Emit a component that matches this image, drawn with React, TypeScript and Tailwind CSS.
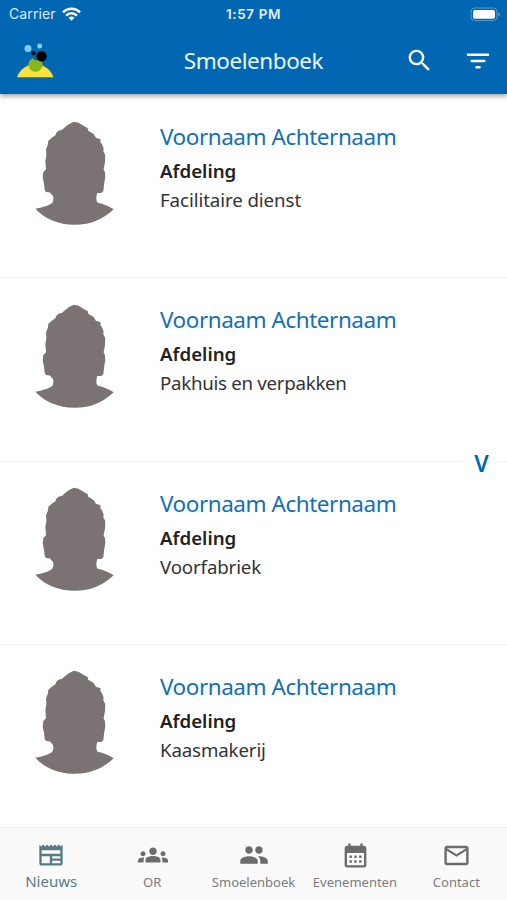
import type { ReactNode } from 'react';
import { MdCalendarMonth, MdGroups, MdMailOutline, MdNewspaper, MdPeople, MdSearch } from 'react-icons/md';

const people = [
  { department: 'Facilitaire dienst', tracking: 'tracking-[-0.08px]' },
  { department: 'Pakhuis en verpakken', tracking: 'tracking-[-0.28px]' },
  { department: 'Voorfabriek', tracking: 'tracking-[-0.14px]' },
  { department: 'Kaasmakerij', tracking: 'tracking-[-0.14px]' },
];

function Silhouette() {
  return (
    <svg viewBox="44 30 236 314" className="h-[104.5px] w-[79px]" preserveAspectRatio="none">
      <path
        fill="#7b7373"
        d="M160 32 L146 39 L134 48 L125 56 L114 59 L107 66 L105 73 L94 80 L84 89 L82 103 L77 115 L78 132 L75 150 L77 175 L69 183 L67 199 L71 219 L73 237 L77 243 L89 245 C93 252 100 254 99 263 L97 274 C88 284 65 290 45 294 C73 324 113 342 163 342 C211 342 251 323 279 295 C263 287 248 279 232 276 C225 270 227 256 230 246 L242 246 L248 241 L251 216 L254 199 L253 184 L249 175 L253 155 L254 133 L248 120 L249 113 L244 100 L239 93 L240 85 L226 80 L219 69 L203 59 L201 50 L196 49 L185 42 L174 35 Z"
      />
    </svg>
  );
}

function Logo() {
  return (
    <svg viewBox="0 0 38 36" className="h-[36px] w-[38px]">
      <path d="M1 35.2C4 27 11 22.3 19.3 22.3S34.5 27 37.5 35.2Z" fill="#fbe13c" />
      <circle cx="19.5" cy="22.8" r="7.1" fill="#8ab51b" />
      <circle cx="20" cy="15.8" r="2.6" fill="#0267b3" />
      <circle cx="12" cy="6.5" r="3.5" fill="#7dcdf4" />
      <circle cx="23.7" cy="4" r="2.5" fill="#7dcdf4" />
      <circle cx="17.5" cy="11.3" r="2.2" fill="#06131c" />
      <circle cx="25.5" cy="14.2" r="5.2" fill="#000" />
    </svg>
  );
}

function Wifi() {
  return (
    <svg viewBox="0 0 19 14" className="ml-[6px] h-[14px] w-[19px]" fill="none" stroke="#fff" strokeWidth="2.5">
      <path d="M1 5.4C5.8.5 13.2.5 18 5.4M4.1 8.6C7.2 5.5 11.8 5.5 14.9 8.6" />
      <path d="M9.5 13.7 6.6 10.7C8.3 9.2 10.7 9.2 12.4 10.7Z" fill="#fff" stroke="none" />
    </svg>
  );
}

function Battery() {
  return (
    <svg viewBox="0 0 31 15" className="h-[15px] w-[31px]">
      <rect x="1" y="1" width="26" height="12.6" rx="3.8" fill="none" stroke="#559acf" strokeWidth="1" />
      <rect x="3" y="3" width="22" height="8.7" rx="1.9" fill="#fff" />
      <path d="M28.5 5.2C30.2 6 30.2 8.7 28.5 9.5Z" fill="#75add8" />
    </svg>
  );
}

function Tab({ icon, label, active }: { icon: ReactNode; label: string; active?: boolean }) {
  return (
    <div className={`flex flex-1 flex-col items-center ${active ? 'text-[#587a88]' : 'text-[#6c6c6c]'}`}>
      <div className="mt-[12px] flex h-[30px] items-center pl-px">{icon}</div>
      <div
        className={`whitespace-nowrap ${active ? 'mt-px pl-px text-[15px] leading-[20px]' : 'mt-[2px] text-[13px] leading-[20px] text-[#7c7c7c]'}`}
      >
        {label}
      </div>
    </div>
  );
}

export default function App() {
  return (
    <div className="relative flex h-[900px] w-[507px] flex-col overflow-hidden bg-white font-['Noto_Sans',sans-serif]">
      <header className="z-10 h-[94px] shrink-0 bg-[#0267b3] text-white shadow-[0_2px_5px_rgba(0,0,0,0.4)]">
        <div className="grid h-[28px] grid-cols-3 items-center font-['Inter',sans-serif] text-[14px] leading-[28px]">
          <div className="flex items-center pl-[9px] tracking-[0.1px] text-[#dcecf7]">
            Carrier
            <Wifi />
          </div>
          <div className="text-center text-[13.5px] font-semibold tracking-[0.6px] text-[#e6f3fb]">1:57 PM</div>
          <div className="flex justify-end pr-[6px]">
            <Battery />
          </div>
        </div>
        <div className="grid h-[66px] grid-cols-[160px_1fr_160px] items-center">
          <div className="mt-[-3px] pl-[16px]">
            <Logo />
          </div>
          <h1 className="text-center text-[22.5px] leading-[30px] tracking-[-0.45px] text-[#e8f5fc]">Smoelenboek</h1>
          <div className="flex items-center justify-end pr-[17px]">
            <MdSearch size={29} className="-mt-px" />
            <svg viewBox="0 0 24 18" className="ml-[32px] h-[18px] w-[24px]" stroke="#fff" strokeWidth="2.5" strokeLinecap="round">
              <path d="M2 2.7H22M5.7 9H18.3M10.5 15.2H13.5" />
            </svg>
          </div>
        </div>
      </header>
      <main className="flex h-[734px] shrink-0 flex-col pt-px">
        {people.map(({ department, tracking }) => (
          <article key={department} className="flex flex-1 border-b border-[#f0f0f0] pl-[34.5px]">
            <div className="mt-[25.5px] w-[125.5px] shrink-0">
              <Silhouette />
            </div>
            <div className="pt-[27px] whitespace-nowrap">
              <h2 className="text-[22.5px] leading-[30px] tracking-[-0.46px] text-[#1470b5]">Voornaam Achternaam</h2>
              <div className="mt-[5px] text-[18.7px] leading-[28px] font-semibold text-[#222]">Afdeling</div>
              <div className={`text-[18.7px] leading-[30px] text-[#333] ${tracking}`}>{department}</div>
            </div>
          </article>
        ))}
      </main>
      <nav className="flex h-[72px] shrink-0 bg-[#fafafa]">
        <Tab icon={<MdNewspaper size={28} />} label="Nieuws" active />
        <Tab icon={<MdGroups size={30} />} label="OR" />
        <Tab icon={<MdPeople size={30} />} label="Smoelenboek" />
        <Tab icon={<MdCalendarMonth size={29} />} label="Evenementen" />
        <Tab icon={<MdMailOutline size={29} />} label="Contact" />
      </nav>
      <div className="absolute top-[448px] left-[465.5px] w-[32px] bg-white text-center text-[23px] leading-[30px] font-semibold text-[#0267b3]">
        V
      </div>
    </div>
  );
}
